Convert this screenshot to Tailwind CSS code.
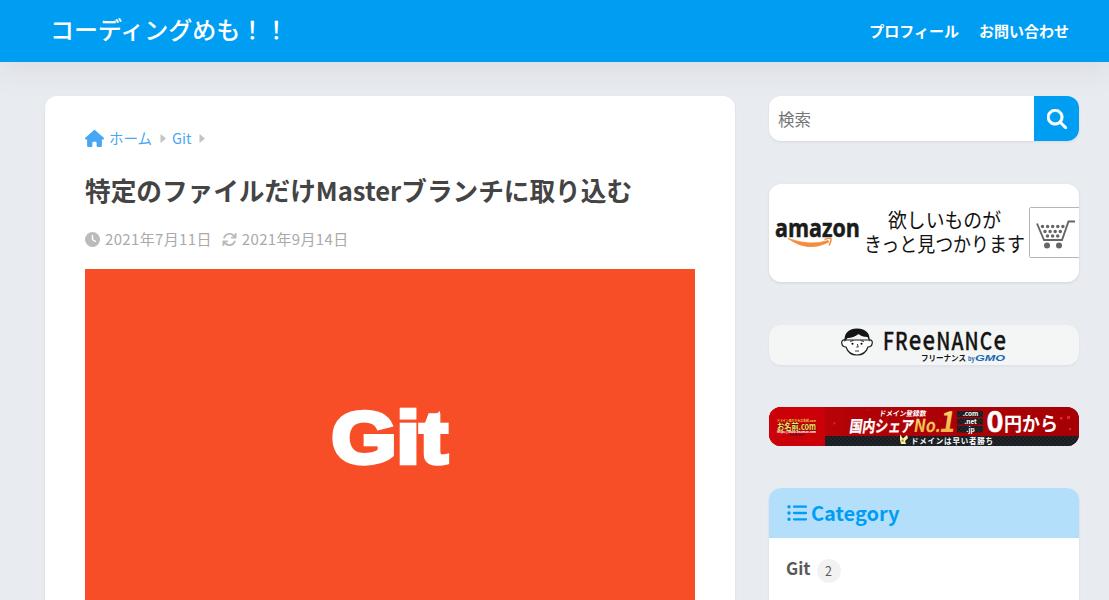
<!DOCTYPE html>
<html lang="ja">
<head>
<meta charset="utf-8">
<title>コーディングめも！！</title>
<script src="https://cdn.jsdelivr.net/npm/@tailwindcss/browser@4"></script>
</head>
<body class="h-[600px] overflow-hidden bg-[#e8ebf0] font-['Noto_Sans_CJK_JP',sans-serif] text-[#444]">
<header class="relative flex h-[62px] items-center justify-between bg-[#009ef3] pl-[50px] pr-10 text-white shadow-[0_3px_36px_rgba(60,50,80,0.1)]">
  <a class="pb-1 text-2xl leading-none font-medium whitespace-nowrap">コーディングめも！！</a>
  <nav class="flex gap-5 pb-0.5 text-[15px] leading-none font-bold whitespace-nowrap"><a>プロフィール</a><a>お問い合わせ</a></nav>
</header>
<div class="flex h-[538px] gap-[34px] overflow-hidden pt-[34px] pl-[45px]">
  <main class="relative h-[504px] w-[690px] shrink-0 rounded-t-xl bg-white px-10 pt-8 shadow-[0_1px_3px_rgba(0,0,0,0.08)]">
    <div class="flex h-5 items-center text-[14.5px] leading-5 text-[#48a7f5]">
      <svg class="mr-[5px] h-[17px] w-[19px]" viewBox="0 0 576 512" fill="currentColor"><path d="M575.8 255.5c0 18-15 32.1-32 32.1h-32l.7 160.2c0 2.700-.2 5.400-.5 8.100V472c0 22.100-17.900 40-40 40H392c-22.100 0-40-17.900-40-40V384c0-17.700-14.300-32-32-32H256c-17.700 0-32 14.300-32 32v88c0 22.100-17.900 40-40 40H104c-22.100 0-40-17.900-40-40V287.600H32c-18 0-32-14-32-32.100c0-9 3-17 10-24L266.400 8c7-7 15-8 22-8s15 2 21 7L564.800 231.500c8 7 12 15 11 24z"/></svg>
      <a>ホーム</a>
      <svg class="mr-[6px] ml-2 h-[9px] w-[6px] text-[#c4c4c4]" viewBox="0 0 6 9" fill="currentColor"><path d="M.5 0.700Q.5-.2 1.200.4L5.500 4Q6 4.500 5.500 5L1.200 8.600Q.5 9.200.5 8.300z"/></svg>
      <a>Git</a>
      <svg class="ml-[7px] h-[9px] w-[6px] text-[#c4c4c4]" viewBox="0 0 6 9" fill="currentColor"><path d="M.5 0.700Q.5-.2 1.200.4L5.500 4Q6 4.500 5.500 5L1.200 8.600Q.5 9.200.5 8.300z"/></svg>
    </div>
    <h1 class="mt-[22px] h-10 text-[25.65px] leading-10 font-bold whitespace-nowrap">特定のファイルだけMasterブランチに取り込む</h1>
    <div class="mt-[19px] flex h-5 items-center text-[15px] leading-5 tracking-[0.35px] whitespace-nowrap text-[#aaa]">
      <svg class="mr-[5px] size-[15px] text-[#bbb]" viewBox="0 0 512 512" fill="currentColor"><path d="M256 0a256 256 0 1 1 0 512A256 256 0 1 1 256 0zM232 120V256c0 8 4 15.500 10.700 20l96 64c11 7.400 25.900 4.400 33.300-6.700s4.400-25.900-6.700-33.300L280 243.200V120c0-13.300-10.700-24-24-24s-24 10.700-24 24z"/></svg>
      <time>2021年7月11日</time>
      <svg class="mr-[5px] ml-[10px] size-[15px] text-[#bbb]" viewBox="0 0 512 512" fill="currentColor"><path d="M105.1 202.6c7.7-21.8 20.2-42.3 37.8-59.8c62.5-62.5 163.8-62.5 226.3 0L386.3 160H336c-17.7 0-32 14.3-32 32s14.3 32 32 32H463.9c17.7 0 32-14.3 32-32V64c0-17.7-14.3-32-32-32s-32 14.3-32 32v51.2L414.4 97.6c-87.5-87.5-229.3-87.5-316.8 0C73.2 122 55.6 150.7 44.8 181.4c-5.9 16.7 2.9 34.9 19.5 40.8s34.9-2.9 40.800-19.500zM39 289.300c-5 1.500-9.800 4.200-13.700 8.200c-4 4-6.700 8.800-8.100 14c-.8 3-1.200 6-1.200 8.900V448c0 17.700 14.300 32 32 32s32-14.300 32-32V396.900l17.600 17.500c87.500 87.400 229.300 87.400 316.700 0c24.400-24.400 42.100-53.100 52.900-83.700c5.900-16.700-2.900-34.900-19.500-40.800s-34.900 2.900-40.800 19.500c-7.700 21.800-20.200 42.300-37.800 59.800c-62.500 62.500-163.800 62.500-226.300 0L125.600 352H176c17.700 0 32-14.300 32-32s-14.300-32-32-32H48.400c-3.200 0-6.300.3-9.400 1.300z"/></svg>
      <time>2021年9月14日</time>
    </div>
    <svg class="mt-[20px] h-[331px] w-[610px] bg-[#f74e27]" viewBox="0 0 610 331"><g font-family="Liberation Sans" font-weight="bold" font-size="73" fill="white" stroke="white" stroke-width="4.500"><text x="246.500" y="194" textLength="116" lengthAdjust="spacingAndGlyphs">Git</text></g><path d="M343 151l12-9v12h-12z" fill="white"/></svg>
  </main>
  <aside class="relative w-[310px] shrink-0">
    <form class="flex h-[45px] overflow-hidden rounded-xl bg-white shadow-[0_1px_3px_rgba(0,0,0,0.08)]">
      <span class="flex flex-1 items-center pt-0.5 pl-[9px] text-[16.5px] leading-none text-[#777]">検索</span>
      <button type="button" class="flex w-[45px] items-center justify-center bg-[#009ef3] text-white" aria-label="検索"><svg class="size-5" viewBox="0 0 512 512" fill="currentColor" stroke="currentColor" stroke-width="14"><path d="M416 208c0 45.9-14.9 88.3-40 122.7L502.6 457.4c12.5 12.5 12.5 32.8 0 45.3s-32.8 12.5-45.3 0L330.7 376c-34.4 25.2-76.8 40-122.7 40C93.1 416 0 322.9 0 208S93.1 0 208 0S416 93.1 416 208zM208 352a144 144 0 1 0 0-288 144 144 0 1 0 0 288z"/></svg></button>
    </form>
    <svg class="mt-[43px] block h-[98px] w-[310px] rounded-xl bg-white shadow-[0_1px_3px_rgba(0,0,0,0.1)]" viewBox="769 184 310 98">
      <text x="775" y="237" textLength="85" lengthAdjust="spacingAndGlyphs" font-family="Open Sans" font-weight="bold" font-size="25" fill="#1b1b1b" stroke="#1b1b1b" stroke-width=".5">amazon</text>
      <path d="M788 238.500q20 14.500 41 3.500l-1-1.500q-17 6-40-2z" fill="#f58b3c" stroke="#f58b3c" stroke-width=".8"/><path d="M824.500 239.500q6-2 6.500-.5t-2 6.500" fill="none" stroke="#f58b3c" stroke-width="1.500"/>
      <g fill="#111" font-family="Noto Sans CJK JP" font-size="20"><text x="888" y="227.500" textLength="113" lengthAdjust="spacingAndGlyphs">欲しいものが</text><text x="864" y="251.500" textLength="161" lengthAdjust="spacingAndGlyphs">きっと見つかります</text></g>
      <rect x="1029.500" y="207.500" width="60" height="50" rx="1" fill="white" stroke="#b5b5b5"/>
      <path d="M1037 223.500l7 16.500h18l6.500-18.500h6.500" fill="none" stroke="#666" stroke-width="1.900"/>
      <g fill="#666"><circle cx="1047" cy="245.500" r="3"/><circle cx="1059" cy="245.500" r="3"/></g>
      <g stroke="#666" stroke-width="3.500" stroke-linecap="round"><path d="M1042.500 226.500h21.500" stroke-dasharray="0 5.100"/><path d="M1045 231.500h16" stroke-dasharray="0 5.100"/><path d="M1047.500 236h11" stroke-dasharray="0 5.100"/></g>
    </svg>
    <svg class="mt-[43px] block h-[40px] w-[310px] rounded-xl bg-[#f4f5f5] shadow-[0_1px_3px_rgba(0,0,0,0.06)]" viewBox="769 325 310 40">
      <path d="M845 340c-5-1-4 7 1 7 2 6 6 8 11 8s9-2 11-8c5 0 6-8 1-7z" fill="white" stroke="#1c1c1c" stroke-width="1.200"/>
      <path d="M844.500 342q-1-13 12.500-13.500 14 .5 12.500 13.500l-2-5q-6 0-9-3-5 4-11 4z" fill="#151515"/>
      <path d="M850 341.500l3.500-1M860.500 340.500l3.500 1M857.300 344l1 3h-2M855 351h4" fill="none" stroke="#222" stroke-width=".9"/><circle cx="852.500" cy="343.700" r="1"/><circle cx="861.500" cy="343.700" r="1"/>
      <g transform="translate(883 350) scale(.82 1)" font-family="Noto Sans CJK JP" font-weight="500" fill="#151515" stroke="#151515" stroke-width=".3"><text y="0" font-size="23.500" textLength="150" lengthAdjust="spacing">FR<tspan font-size="27">ee</tspan>NANC<tspan font-size="27">e</tspan></text></g>
      <text x="921" y="361" textLength="45" lengthAdjust="spacingAndGlyphs" font-family="Noto Sans CJK JP" font-weight="bold" font-size="8" fill="#151515">フリーナンス</text>
      <text x="968" y="361" font-family="Liberation Sans" font-weight="bold" font-size="6.500" fill="#1768b5" textLength="6.500" lengthAdjust="spacingAndGlyphs">by</text>
      <text x="975" y="361" textLength="30" lengthAdjust="spacingAndGlyphs" font-family="Liberation Sans" font-weight="bold" font-style="italic" font-size="9" fill="#1768b5">GMO</text>
    </svg>
    <svg class="mt-[42px] block h-[39px] w-[310px] rounded-xl bg-[#b40408]" viewBox="769 407 310 39">
      <defs><linearGradient id="red"><stop stop-color="#c5060b"/><stop offset=".3" stop-color="#b00207"/><stop offset="1" stop-color="#a50005"/></linearGradient><linearGradient id="gold" x2="0" y2="1"><stop stop-color="#ffe67c"/><stop offset="1" stop-color="#eca839"/></linearGradient><pattern id="dots" width="4" height="4" patternUnits="userSpaceOnUse"><path fill="#181c20" d="M0 0h4v4H0z"/><circle cx="1" cy="1" r=".6" fill="#44484b"/><circle cx="3" cy="3" r=".6" fill="#44484b"/></pattern></defs>
      <path fill="url(#red)" d="M769 407h310v39H769z"/><path fill="#cb0009" d="M769 407h56v39h-56z"/><path fill="url(#dots)" d="M825 436h254v10H825z"/>
      <g font-family="Noto Sans CJK JP" font-weight="bold">
        <text x="777" y="421.500" font-size="3.500" fill="#f5c54a" textLength="39" lengthAdjust="spacingAndGlyphs">ドメイン取るならお名前.com</text>
        <text x="777" y="430" font-size="9" fill="#ffdb62" stroke="#501a0a" stroke-width="1" paint-order="stroke" textLength="39" lengthAdjust="spacingAndGlyphs">お名前.com</text>
        <text x="777" y="433" font-size="3" fill="white" textLength="39" lengthAdjust="spacingAndGlyphs">https://www.onamae.com</text>
        <path fill="#701313" d="M790 434h14v1.500h-14z"/>
        <g transform="translate(879 415.500) skewX(-8)"><text font-size="7" fill="white" textLength="47" lengthAdjust="spacingAndGlyphs">ドメイン登録数</text></g>
        <g transform="translate(849 432) skewX(-8)"><text font-size="16" fill="white" stroke="white" stroke-width=".3" textLength="64" lengthAdjust="spacingAndGlyphs">国内シェア</text></g>
        <g transform="translate(913 432) skewX(-9)" fill="url(#gold)"><text font-size="18" textLength="27" lengthAdjust="spacingAndGlyphs">No.</text></g>
        <g transform="translate(938.500 432) skewX(-9)" fill="url(#gold)"><text font-size="28" textLength="16" lengthAdjust="spacingAndGlyphs">1</text></g>
        <path fill="url(#dots)" d="M957 411h26v6h-26zM957 418.500h26v6h-26zM957 426h26v6.500h-26z"/>
        <g font-size="6.500" fill="white" text-anchor="middle"><text x="970.500" y="416">.com</text><text x="970.500" y="424">.net</text><text x="970.500" y="432">.jp</text></g>
        <text x="986.500" y="432" font-size="28" fill="white" stroke="white" stroke-width=".5" textLength="17" lengthAdjust="spacingAndGlyphs">0</text><text x="1004" y="431" font-size="19" fill="white" textLength="54" lengthAdjust="spacingAndGlyphs">円から</text>
        <text x="911" y="444" font-size="7.500" fill="white" textLength="82">ドメインは早い者勝ち</text>
      </g>
      <path d="M900 434.500l3 4 4-3.500 1 3-3 3 1 3h-5l-1-4z" fill="#fff3a0"/><path d="M901 441l2-2 1 3z" fill="#829a45"/>
      <g fill="#e7232c"><path d="M833 422l3 1-2 2zM867 409l1 1-1 1zM1060 417h2.500v2.500h-2.500zM1067 416h3v3h-3zM1069 428h2v2h-2z"/></g>
    </svg>
    <section class="mt-[42px] h-[112px] overflow-hidden rounded-t-xl bg-white shadow-[0_1px_3px_rgba(0,0,0,0.08)]">
      <h2 class="flex h-[50px] items-center bg-[#b3dffb] pb-px pl-[18px] text-[20px] leading-none font-bold text-[#009ef3]">
        <svg class="mr-1 h-[18px] w-5" viewBox="0 0 20 18" fill="none" stroke="currentColor" stroke-linecap="round"><g stroke-width="3.400"><path d="M2 2.700h.01M2 9h.01M2 15.300h.01"/></g><path stroke-width="2.300" d="M7 2.700h12M7 9h12M7 15.300h12"/></svg>Category</h2>
      <div class="flex items-center pt-[17px] pl-[17px] text-[17px] leading-6 font-bold text-[#5a5a5a]"><span class="-mt-0.5">Git</span><span class="mt-1 ml-[6px] flex size-6 items-center justify-center rounded-full bg-[#f2f2f2] text-[12.500px] leading-none font-normal">2</span></div>
    </section>
  </aside>
</div>
</body>
</html>
